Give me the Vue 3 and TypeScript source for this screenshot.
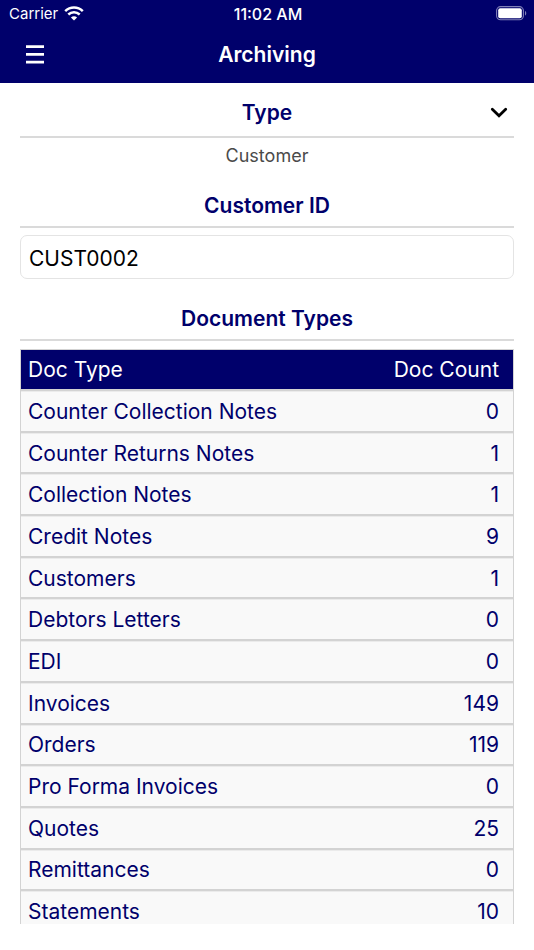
<script setup lang="ts">
import { ref } from 'vue'

interface DocType {
  name: string
  count: number
}

const customerId = ref('CUST0002')
const typeOpen = ref(true)

const docTypes: DocType[] = [
  { name: 'Counter Collection Notes', count: 0 },
  { name: 'Counter Returns Notes', count: 1 },
  { name: 'Collection Notes', count: 1 },
  { name: 'Credit Notes', count: 9 },
  { name: 'Customers', count: 1 },
  { name: 'Debtors Letters', count: 0 },
  { name: 'EDI', count: 0 },
  { name: 'Invoices', count: 149 },
  { name: 'Orders', count: 119 },
  { name: 'Pro Forma Invoices', count: 0 },
  { name: 'Quotes', count: 25 },
  { name: 'Remittances', count: 0 },
  { name: 'Statements', count: 10 },
]
</script>

<template>
  <div class="app">
    <header class="top">
      <div class="status">
        <div class="carrier">
          <span>Carrier</span>
          <svg class="wifi" width="20" height="15" viewBox="0 0 20 15" aria-hidden="true">
            <path d="M1.2 5.2C6.2.4 13.8.4 18.8 5.2" />
            <path d="M4.3 8.5c3.3-3.1 8.1-3.1 11.4 0" />
            <path class="dot" d="M10 14.6 6.9 11.5c1.7-1.6 4.5-1.6 6.2 0z" />
          </svg>
        </div>
        <span class="clock">11:02 AM</span>
        <div class="power">
          <svg width="31" height="15" viewBox="0 0 31 15" aria-hidden="true">
            <rect x=".6" y=".6" width="26.8" height="13.2" rx="4" fill="none" stroke="#8080b8" stroke-width="1.1" />
            <rect x="2.2" y="2.2" width="23.6" height="10" rx="2" fill="#fff" />
            <path d="M29 5v4.6c1.7-.6 1.7-4 0-4.6z" fill="#8080b8" />
          </svg>
        </div>
      </div>
      <div class="bar">
        <button class="menu" type="button" aria-label="Menu">
          <svg width="18" height="19" viewBox="0 0 18 19" aria-hidden="true">
            <path d="M0 1.7h18M0 9.4h18M0 17.1h18" stroke="#fff" stroke-width="2.8" />
          </svg>
        </button>
        <h1>Archiving</h1>
      </div>
    </header>

    <main class="content">
      <section>
        <h2 class="heading type-heading">
          <button class="toggle" type="button" :aria-expanded="typeOpen" @click="typeOpen = !typeOpen">
            <span>Type</span>
            <svg width="18" height="12" viewBox="0 0 18 12" aria-hidden="true">
              <path d="M2.3 2.3 9 8.8l6.7-6.5" fill="none" stroke="#000" stroke-width="2.8" stroke-linecap="round" />
            </svg>
          </button>
        </h2>
        <p v-if="typeOpen" class="type-value">Customer</p>
      </section>

      <section>
        <h2 class="heading"><label for="customer-id">Customer ID</label></h2>
        <input id="customer-id" v-model="customerId" class="field" type="text" />
      </section>

      <section>
        <h2 id="doc-types" class="heading">Document Types</h2>
        <table class="docs" aria-labelledby="doc-types">
          <thead>
            <tr>
              <th scope="col">Doc Type</th>
              <th scope="col" class="count">Doc Count</th>
            </tr>
          </thead>
          <tbody>
            <tr v-for="doc in docTypes" :key="doc.name">
              <td>{{ doc.name }}</td>
              <td class="count">{{ doc.count }}</td>
            </tr>
          </tbody>
        </table>
      </section>
    </main>
  </div>
</template>

<style>
body {
  margin: 0;
  background: #fff;
}
</style>

<style scoped>
.app {
  display: flex;
  flex-direction: column;
  height: 100vh;
  box-sizing: border-box;
  padding-bottom: 26px;
  font-family: Inter, "Liberation Sans", sans-serif;
  color: #00006b;
}

.top {
  flex: none;
  background: #00006b;
  color: #fff;
}

.status {
  display: grid;
  grid-template-columns: 1fr auto 1fr;
  align-items: center;
  height: 27px;
  padding: 0 7px 0 9px;
  font-size: 15px;
}

.carrier {
  display: flex;
  align-items: center;
  gap: 6px;
}

.wifi {
  fill: none;
  stroke: #fff;
  stroke-width: 2.5;
}

.wifi .dot {
  fill: #fff;
  stroke: none;
}

.clock {
  font-size: 16px;
  font-weight: 500;
}

.power {
  display: flex;
  justify-content: flex-end;
}

.bar {
  display: grid;
  grid-template-columns: 40px 1fr 40px;
  align-items: center;
  height: 54px;
  padding: 0 15px 2px;
}

.menu,
.toggle {
  border: 0;
  padding: 0;
  background: none;
  color: inherit;
  font: inherit;
  cursor: pointer;
}

.menu {
  display: flex;
  align-items: center;
  justify-content: center;
  height: 40px;
}

h1 {
  margin: 0;
  text-align: center;
  font-size: 21px;
  font-weight: 600;
}

.content {
  flex: 1;
  min-height: 0;
  overflow: hidden;
  padding: 0 20px;
}

.heading {
  margin: 0;
  padding: 9px 0 7px;
  border-bottom: 2px solid #dadada;
  text-align: center;
  font-size: 21px;
  line-height: 26px;
  font-weight: 600;
}

.type-heading {
  padding: 17px 0 10px;
}

.toggle {
  display: grid;
  grid-template-columns: 30px 1fr 30px;
  align-items: center;
  width: 100%;
}

.toggle span {
  grid-column: 2;
}

.toggle svg {
  justify-self: center;
}

.type-value {
  margin: 0;
  padding: 6px 0 16px;
  text-align: center;
  font-size: 18px;
  line-height: 24px;
  color: #4a4a4a;
}

.field {
  display: block;
  box-sizing: border-box;
  width: 100%;
  height: 44px;
  margin: 7px 0 18px;
  padding: 2px 8px 0;
  border: 1px solid #e4e4e4;
  border-radius: 7px;
  background: #fff;
  color: #000;
  font-family: inherit;
  font-size: 21px;
}

.docs {
  width: 100%;
  height: 585px;
  margin-top: 8px;
  border-collapse: separate;
  border-spacing: 0;
  border: 1px solid #d3d3d3;
  font-size: 21px;
  line-height: 26px;
}

th,
td {
  box-sizing: border-box;
  padding: 1px 14px 0 7px;
  border-bottom: 2px solid #d3d3d3;
  text-align: left;
  font-weight: 400;
}

th {
  height: 41px;
  background: #00006b;
  color: #fff;
}

td {
  border-top: 1px solid #ebebeb;
  background: #f9f9f9;
}

.count {
  text-align: right;
}
</style>
